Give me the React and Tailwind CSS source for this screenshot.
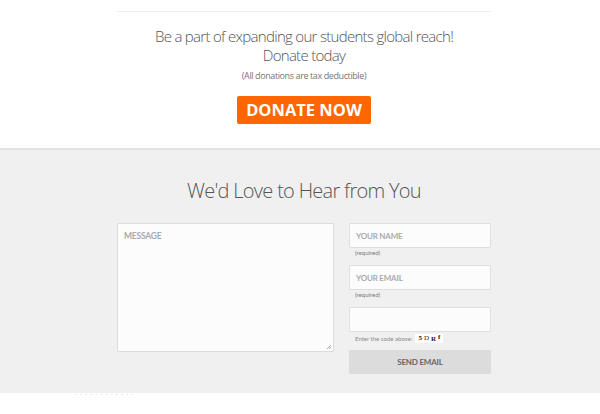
import React from "react";

function Captcha() {
  return (
    <span className="inline-flex items-center gap-[2px] bg-white px-[3px] h-[9px] text-[7px] font-bold text-[#222] font-['Liberation_Serif',serif]">
      <span>5</span>
      <span className="font-normal">D</span>
      <span className="translate-y-[1px]">R</span>
      <span className="-translate-y-[1px]">f</span>
    </span>
  );
}

export default function App() {
  return (
    <div className="w-[600px] h-[414px] overflow-hidden bg-white font-['Open_Sans',sans-serif]">
      {/* Donate block */}
      <div className="h-[148px] pl-[8px] flex flex-col items-center">
        <div className="mt-[11px] w-[374px] h-px bg-[#eeeeee]" />
        <h2 className="mt-[15px] text-center text-[15px] leading-[19px] tracking-[-0.7px] font-light text-[#555]">
          Be a part of expanding our students global reach!
          <br />
          Donate today
        </h2>
        <p className="mt-[4px] text-[9px] leading-[13px] tracking-[-0.4px] text-[#777]">(All donations are tax deductible)</p>
        <a className="mt-[14px] w-[134px] h-[28px] flex items-center justify-center bg-[#ff6600] rounded-[2px] text-white text-[16.5px] font-bold">
          DONATE NOW
        </a>
      </div>

      {/* Contact block */}
      <div className="h-[245px] pl-[8px] border-t-2 border-[#e3e3e3] bg-[#f0f0f0] flex flex-col items-center">
        <h2 className="mt-[28px] text-[20px] leading-[25px] tracking-[-0.7px] font-light text-[#555]">We'd Love to Hear from You</h2>
        <div className="mt-[20px] w-[374px] flex gap-[15px] font-['Lato',sans-serif]">
          <div className="relative w-[217px] h-[129px] bg-[#fcfcfc] border border-[#dcdcdc] rounded-[1px]">
            <span className="absolute left-[6px] top-[6px] text-[8.5px] tracking-[-0.2px] font-bold text-[#aaa]">MESSAGE</span>
            <svg className="absolute right-[1px] bottom-[1px]" width="6" height="6" viewBox="0 0 6 6">
              <path d="M5 1L1 5M5 3L3 5" stroke="#999" strokeWidth="0.8" />
            </svg>
          </div>
          <div className="w-[142px] flex flex-col">
            <div className="h-[25px] bg-[#fcfcfc] border border-[#dedede] rounded-[1px] flex items-center pl-[6px] text-[8px] tracking-[-0.2px] font-bold text-[#aaa]">
              YOUR NAME
            </div>
            <span className="mt-[1px] pl-[6px] text-[6px] leading-[8px] text-[#777]">(required)</span>
            <div className="mt-[8px] h-[25px] bg-[#fcfcfc] border border-[#dedede] rounded-[1px] flex items-center pl-[6px] text-[8px] tracking-[-0.2px] font-bold text-[#aaa]">
              YOUR EMAIL
            </div>
            <span className="mt-[1px] pl-[6px] text-[6px] leading-[8px] text-[#777]">(required)</span>
            <div className="mt-[8px] h-[25px] bg-[#fcfcfc] border border-[#dedede] rounded-[1px]" />
            <div className="mt-[1px] pl-[6px] flex items-center gap-[3px] h-[10px]">
              <span className="text-[6px] text-[#888]">Enter the code above:</span>
              <Captcha />
            </div>
            <button className="mt-[7px] h-[24px] bg-[#dcdcdc] rounded-[1px] text-[8px] tracking-[-0.2px] font-bold text-[#666]">
              SEND EMAIL
            </button>
          </div>
        </div>
      </div>

      {/* Footer peek */}
      <div className="h-[21px] bg-white relative">
        <span className="absolute left-[75px] -top-[4px] text-[6px] text-[#999] tracking-[1px]">. . . . . . . . , . . .</span>
      </div>
    </div>
  );
}
